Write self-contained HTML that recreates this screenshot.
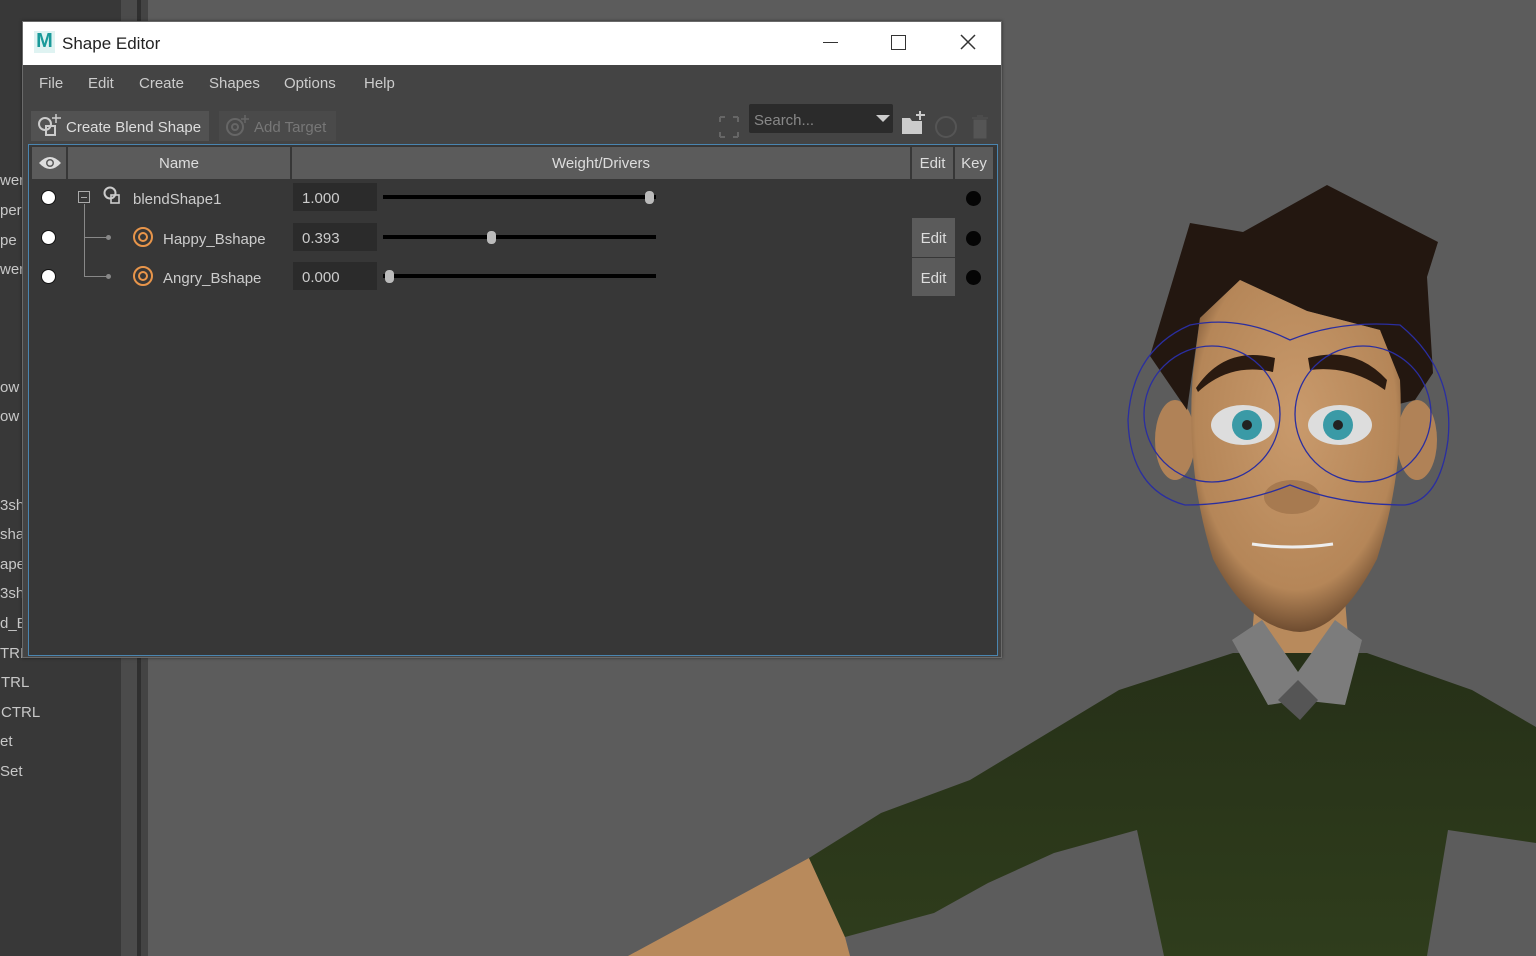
<!DOCTYPE html>
<html><head><meta charset="utf-8"><style>
*{margin:0;padding:0;box-sizing:border-box}
body{width:1536px;height:956px;overflow:hidden;background:#5c5c5c;font-family:"Liberation Sans",sans-serif;position:relative}
.abs{position:absolute}
#left{left:0;top:0;width:121px;height:956px;background:#383838}
#strip1{left:121px;top:0;width:16px;height:956px;background:#4b4b4b}
#strip2{left:137px;top:0;width:4px;height:956px;background:#2f2f2f}
#strip3{left:141px;top:0;width:7px;height:956px;background:#444}
.lt{position:absolute;color:#c8c8c8;font-size:15px;white-space:nowrap}
#win{left:22px;top:21px;width:980px;height:637px;background:#444;box-shadow:0 0 3px rgba(0,0,0,.5);border:1px solid #6a6a6a}
#title{left:0;top:0;width:978px;height:43px;background:#fff}
.menu{position:absolute;top:53px;color:#ccc;font-size:15px}
#table{left:5px;top:122px;width:970px;height:512px;border:1px solid #4a85b0;background:#373737}
.hdr{position:absolute;top:2px;height:32px;background:#5b5b5b;color:#ddd;font-size:15px;text-align:center;line-height:34px}
.fld{position:absolute;left:264px;width:84px;height:28px;background:#2b2b2b;color:#ccc;font-size:15px;line-height:31px;padding-left:9px}
.dot{position:absolute;left:13px;width:13px;height:13px;border-radius:50%;background:#fff;box-shadow:0 0 0 1px #111}
.key{position:absolute;left:937px;width:15px;height:15px;border-radius:50%;background:#050505}
.nm{position:absolute;color:#ccc;font-size:15px}
.trk{position:absolute;left:354px;width:273px;height:4px;background:#000}
.knob{position:absolute;width:9px;height:13px;border-radius:4px;background:#bbb}
.ebtn{position:absolute;left:883px;width:43px;height:39px;background:#5b5b5b;color:#ddd;font-size:15px;text-align:center;line-height:41px}
.tgt{position:absolute;left:104px;width:20px;height:20px;border-radius:50%;border:2px solid #e8954a}
.tgt::after{content:"";position:absolute;left:3px;top:3px;width:6px;height:6px;border-radius:50%;border:2px solid #e8954a}
</style></head><body>
<div id="left" class="abs">
<div class="lt" style="left:0;top:172px">wer</div>
<div class="lt" style="left:0;top:202px">per</div>
<div class="lt" style="left:0;top:232px">pe</div>
<div class="lt" style="left:0;top:261px">wer</div>
<div class="lt" style="left:0;top:379px">ow</div>
<div class="lt" style="left:0;top:408px">ow</div>
<div class="lt" style="left:0;top:497px">3sh</div>
<div class="lt" style="left:0;top:526px">sha</div>
<div class="lt" style="left:0;top:556px">ape</div>
<div class="lt" style="left:0;top:585px">3sh</div>
<div class="lt" style="left:0;top:615px">d_E</div>
<div class="lt" style="left:0;top:645px">TRL</div>
<div class="lt" style="left:1px;top:674px">TRL</div>
<div class="lt" style="left:1px;top:704px">CTRL</div>
<div class="lt" style="left:0;top:733px">et</div>
<div class="lt" style="left:0;top:763px">Set</div>
</div>
<div id="strip1" class="abs"></div><div id="strip2" class="abs"></div><div id="strip3" class="abs"></div>

<svg class="abs" style="left:0;top:0" width="1536" height="956" viewBox="0 0 1536 956">
<defs>
<radialGradient id="skin" cx="50%" cy="40%" r="60%"><stop offset="0" stop-color="#c99a6c"/><stop offset="0.8" stop-color="#b58658"/><stop offset="1" stop-color="#6e4c30"/></radialGradient>
<linearGradient id="sw" x1="0" y1="0" x2="0" y2="1"><stop offset="0" stop-color="#263018"/><stop offset="1" stop-color="#2f3d1c"/></linearGradient>
</defs>
<polygon points="809,858 845,937 850,956 628,956" fill="#b88a5c"/>
<polygon points="1255,600 1345,600 1350,660 1300,690 1250,660" fill="#b88a5c"/>
<polygon points="1233,653 1119,690 970,780 881,813 809,858 845,937 934,913 988,883 1054,853 1137,830 1164,956 1427,956 1448,830 1536,843 1536,727 1472,690 1367,653" fill="url(#sw)"/>
<polygon points="1232,640 1262,620 1298,672 1335,620 1362,640 1345,705 1300,700 1268,705" fill="#7c7c7c"/>
<polygon points="1278,700 1298,680 1318,700 1300,720" fill="#555"/>
<ellipse cx="1175" cy="440" rx="20" ry="40" fill="#b08257"/>
<ellipse cx="1417" cy="440" rx="20" ry="40" fill="#b08257"/>
<polygon points="1187,410 1150,356 1190,223 1243,232 1327,185 1438,242 1427,277 1433,373 1415,400 1395,405 1380,330 1307,311 1240,280 1200,318" fill="#231710"/>
<path d="M1200,318 L1240,280 L1307,311 L1380,330 L1400,380 Q1405,470 1377,559 Q1340,630 1300,632 Q1250,630 1213,559 Q1185,470 1193,373 Z" fill="url(#skin)"/>
<path d="M1196,388 Q1225,345 1275,358 L1273,372 Q1230,362 1198,392Z" fill="#2a1a10"/>
<path d="M1308,358 Q1355,345 1387,380 L1385,390 Q1350,365 1310,370Z" fill="#2a1a10"/>
<ellipse cx="1243" cy="425" rx="32" ry="20" fill="#ddd"/>
<ellipse cx="1340" cy="425" rx="32" ry="20" fill="#ddd"/>
<circle cx="1247" cy="425" r="15" fill="#3a9aa6"/><circle cx="1247" cy="425" r="5" fill="#222"/>
<circle cx="1338" cy="425" r="15" fill="#3a9aa6"/><circle cx="1338" cy="425" r="5" fill="#222"/>
<ellipse cx="1292" cy="497" rx="28" ry="17" fill="#a77a50"/>
<path d="M1252,544 Q1292,550 1333,544" stroke="#eee" stroke-width="3" fill="none"/>
<g stroke="#2a2ea0" stroke-width="1.3" fill="none">
<circle cx="1212" cy="414" r="68"/><circle cx="1363" cy="414" r="68"/>
<path d="M1190,325 Q1240,315 1290,340 Q1340,320 1400,325 Q1455,370 1448,440 Q1440,500 1405,505 Q1340,505 1290,485 Q1240,505 1185,505 Q1130,490 1128,420 Q1132,350 1190,325Z"/>
</g>
</svg>

<div id="win" class="abs">
<div id="title" class="abs">
<div class="abs" style="left:11px;top:9px;width:21px;height:22px;background:#dff3f2"><div style="font:bold 20px 'Liberation Sans';color:#1a9a9a;line-height:21px;text-align:center">M</div></div>
<div class="abs" style="left:39px;top:12px;font-size:17px;color:#222">Shape Editor</div>
<div class="abs" style="left:800px;top:20px;width:15px;height:1px;background:#333"></div>
<div class="abs" style="left:868px;top:13px;width:15px;height:15px;border:1.5px solid #333"></div>
<svg class="abs" style="left:937px;top:12px" width="16" height="16"><path d="M1,1L15,15M15,1L1,15" stroke="#333" stroke-width="1.5"/></svg>
</div>
<div class="menu" style="left:16px">File</div>
<div class="menu" style="left:65px">Edit</div>
<div class="menu" style="left:116px">Create</div>
<div class="menu" style="left:186px">Shapes</div>
<div class="menu" style="left:261px">Options</div>
<div class="menu" style="left:341px">Help</div>
<div class="abs" style="left:8px;top:89px;width:178px;height:30px;background:#525252"></div>
<svg class="abs" style="left:13px;top:90px" width="26" height="26"><circle cx="9" cy="12" r="6" fill="none" stroke="#ccc" stroke-width="2"/><rect x="10" y="14" width="9" height="9" fill="none" stroke="#ccc" stroke-width="2"/><path d="M20,2v9M16,6h9" stroke="#ccc" stroke-width="1.5"/></svg>
<div class="abs" style="left:43px;top:97px;color:#ddd;font-size:15px">Create Blend Shape</div>
<div class="abs" style="left:196px;top:89px;width:117px;height:30px;background:#4a4a4a"></div>
<svg class="abs" style="left:201px;top:91px" width="26" height="26"><circle cx="11" cy="14" r="8" fill="none" stroke="#666" stroke-width="2"/><circle cx="11" cy="14" r="3" fill="none" stroke="#666" stroke-width="2"/><path d="M21,2v8M17,6h8" stroke="#666" stroke-width="1.5"/></svg>
<div class="abs" style="left:231px;top:97px;color:#777;font-size:15px">Add Target</div>
<svg class="abs" style="left:694px;top:92px" width="24" height="26"><path d="M3,3h5M3,3v5M21,3h-5M21,3v5M3,23h5M3,23v-5M21,23h-5M21,23v-5" stroke="#666" stroke-width="2"/></svg>
<div class="abs" style="left:726px;top:82px;width:144px;height:29px;background:#2b2b2b;border-radius:2px"></div>
<div class="abs" style="left:731px;top:90px;color:#888;font-size:15px">Search...</div>
<div class="abs" style="left:853px;top:93px;width:0;height:0;border-left:7px solid transparent;border-right:7px solid transparent;border-top:7px solid #ccc"></div>
<svg class="abs" style="left:877px;top:88px" width="28" height="28"><path d="M2,8h8l2,3h10v13H2Z" fill="#ccc"/><path d="M20,1v9M16,5h9" stroke="#ccc" stroke-width="2"/></svg>
<svg class="abs" style="left:911px;top:93px" width="24" height="24"><circle cx="12" cy="12" r="10" fill="none" stroke="#555" stroke-width="2"/></svg>
<svg class="abs" style="left:948px;top:93px" width="18" height="24"><path d="M1,3h16M6,1h6M3,5h12v18H3Z" fill="#555" stroke="#555"/></svg>
<div id="table" class="abs">
<div class="hdr" style="left:3px;width:34px"></div>
<svg class="abs" style="left:9px;top:9px" width="24" height="18"><path d="M1,9Q12,-3 23,9Q12,21 1,9Z" fill="#ddd"/><circle cx="12" cy="9" r="4" fill="#5b5b5b"/><circle cx="12" cy="9" r="2.5" fill="#ddd"/></svg>
<div class="hdr" style="left:39px;width:222px">Name</div>
<div class="hdr" style="left:263px;width:618px">Weight/Drivers</div>
<div class="hdr" style="left:883px;width:41px">Edit</div>
<div class="hdr" style="left:926px;width:38px">Key</div>

<div class="dot" style="top:46px"></div>
<div class="dot" style="top:86px"></div>
<div class="dot" style="top:125px"></div>
<div class="abs" style="left:49px;top:46px;width:12px;height:12px;border:1px solid #aaa"></div>
<div class="abs" style="left:52px;top:52px;width:6px;height:1px;background:#aaa"></div>
<div class="abs" style="left:55px;top:59px;width:1px;height:72px;background:#888"></div>
<div class="abs" style="left:55px;top:92px;width:24px;height:1px;background:#888"></div>
<div class="abs" style="left:55px;top:131px;width:24px;height:1px;background:#888"></div>
<div class="abs" style="left:77px;top:90px;width:5px;height:5px;border-radius:50%;background:#888"></div>
<div class="abs" style="left:77px;top:129px;width:5px;height:5px;border-radius:50%;background:#888"></div>
<svg class="abs" style="left:73px;top:40px" width="22" height="22"><circle cx="8" cy="8" r="5.5" fill="none" stroke="#ccc" stroke-width="2"/><rect x="9" y="10" width="8" height="8" fill="none" stroke="#ccc" stroke-width="1.6"/></svg>
<div class="nm" style="left:104px;top:46px">blendShape1</div>
<div class="tgt" style="top:82px"></div>
<div class="nm" style="left:134px;top:86px">Happy_Bshape</div>
<div class="tgt" style="top:121px"></div>
<div class="nm" style="left:134px;top:125px">Angry_Bshape</div>

<div class="fld" style="top:38px">1.000</div>
<div class="fld" style="top:78px">0.393</div>
<div class="fld" style="top:117px">0.000</div>
<div class="trk" style="top:50px"></div><div class="knob" style="left:616px;top:46px"></div>
<div class="trk" style="top:90px"></div><div class="knob" style="left:458px;top:86px"></div>
<div class="trk" style="top:129px"></div><div class="knob" style="left:356px;top:125px"></div>
<div class="ebtn" style="top:73px">Edit</div>
<div class="ebtn" style="top:113px;height:38px">Edit</div>
<div class="key" style="top:46px"></div>
<div class="key" style="top:86px"></div>
<div class="key" style="top:125px"></div>
</div>
</div>
</body></html>
